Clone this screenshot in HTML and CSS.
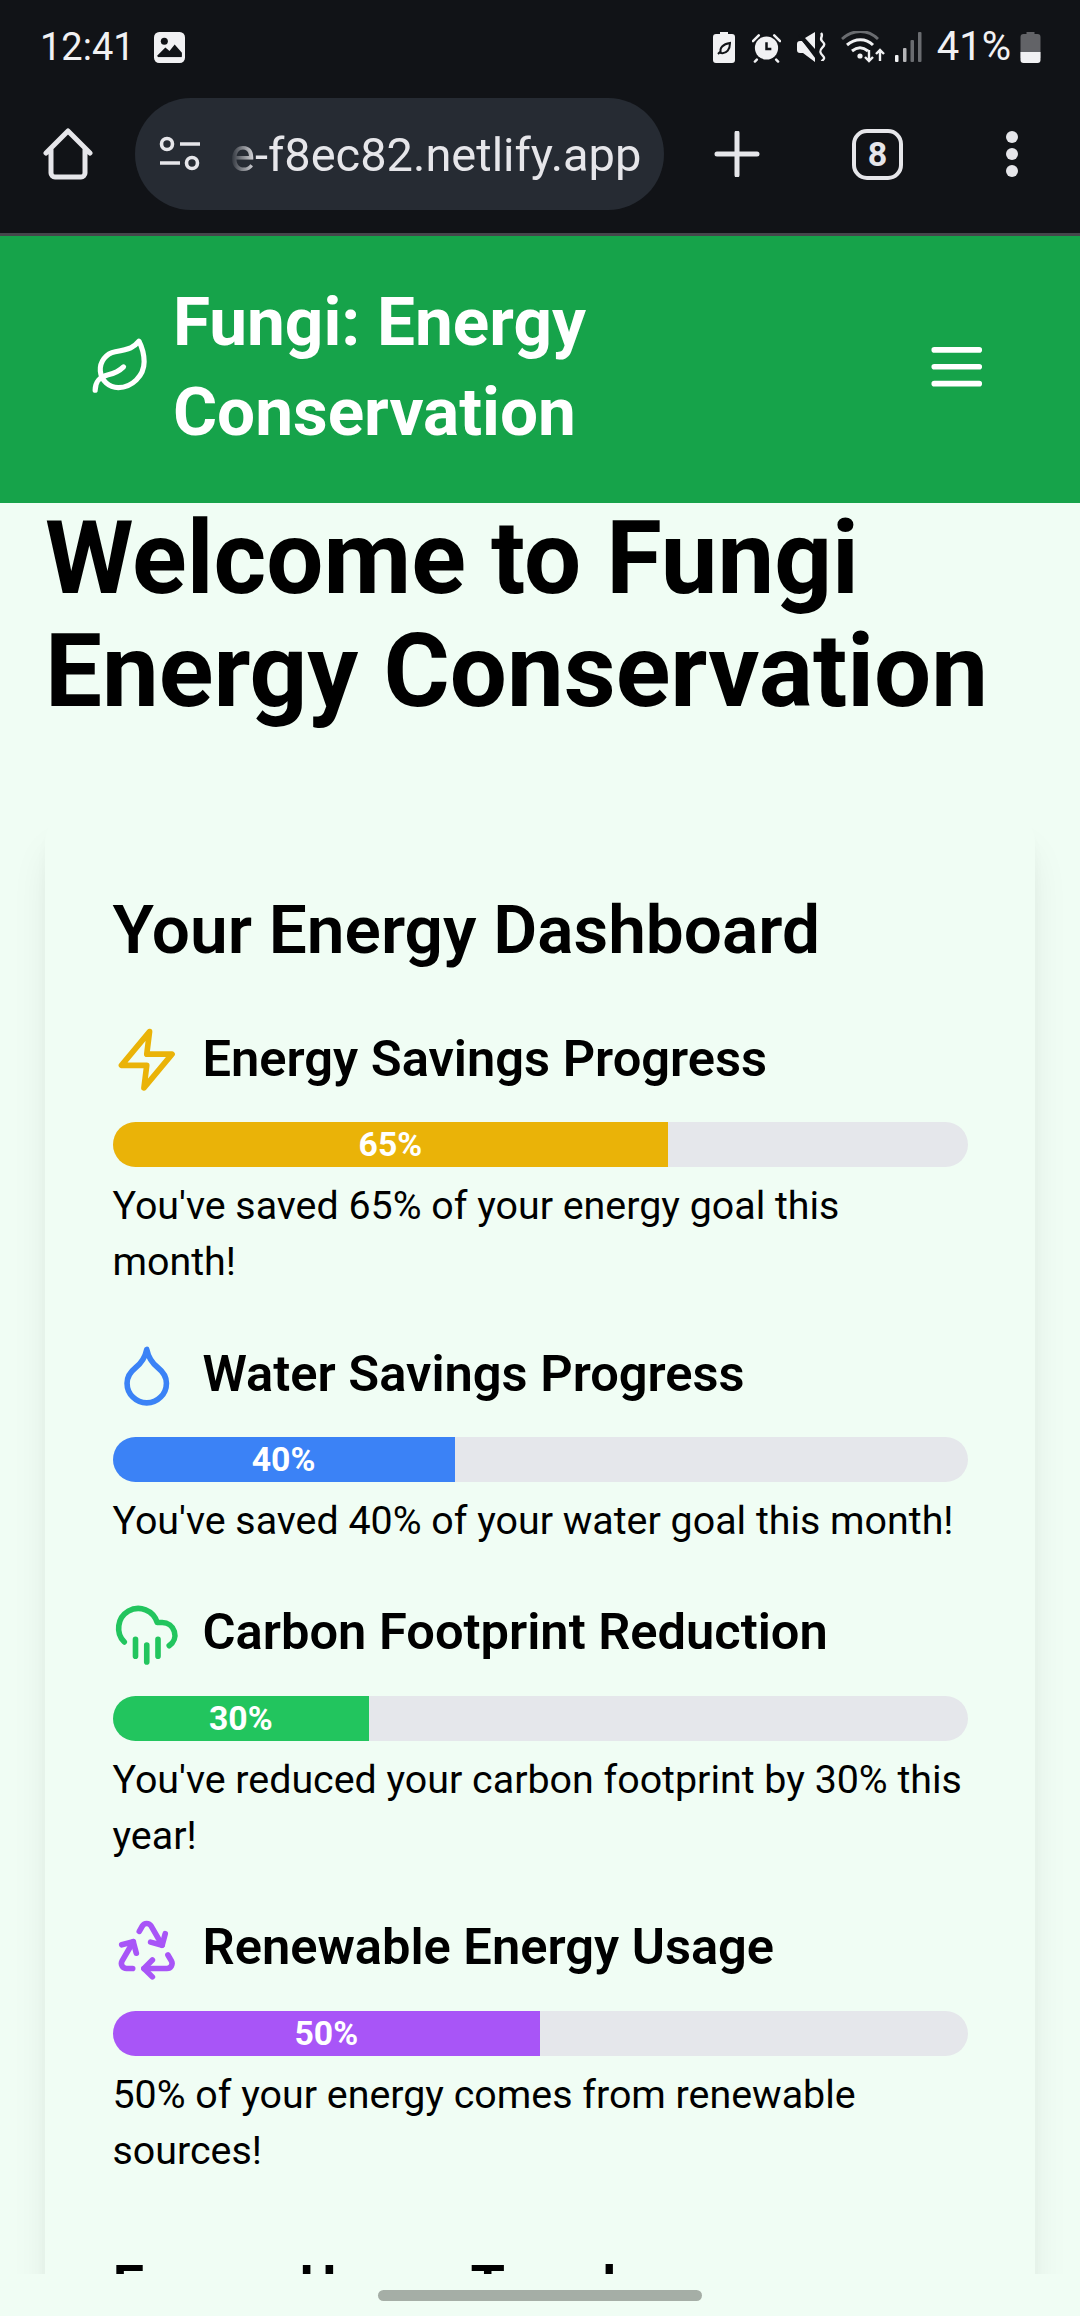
FILE: index.html
```html
<!DOCTYPE html>
<html lang="en">
<head>
<meta charset="utf-8">
<title>Fungi: Energy Conservation</title>
<link rel="stylesheet" href="styles.css">
</head>
<body>
<div class="browser-chrome">
  <div class="status-bar">
    <div class="status-left">
      <span class="clock">12:41</span>
      <svg class="st-image" viewBox="0 0 30 30"><rect width="30" height="30" rx="5" fill="#f1f1f3"/><circle cx="10" cy="9" r="3.400" fill="#111317"/><path d="M3 23l8-8 4 3.500 5-6.500 7 8v3.500a1 1 0 0 1-1 1H4z" fill="#111317"/><rect x="4" y="24.500" width="22" height="2" fill="#f1f1f3"/></svg>
    </div>
    <div class="status-right">
      <svg class="st-bat-leaf" viewBox="0 0 22 31"><path d="M7 0h8v2h4a3 3 0 0 1 3 3v23a3 3 0 0 1-3 3H3a3 3 0 0 1-3-3V5a3 3 0 0 1 3-3h4z" fill="#f1f1f3"/><path d="M5 22c1-1 2-2 3-3M8 21c-2-5 2-9 9-10 0 6-3 11-9 10z" fill="none" stroke="#111317" stroke-width="2"/></svg>
      <svg class="st-alarm" viewBox="0 0 30 31"><circle cx="15" cy="16" r="12" fill="#f1f1f3"/><path d="M15 10v7h5" fill="none" stroke="#111317" stroke-width="2.600"/><path d="M1 9l6-6M29 9l-6-6M5 28l-2 2M25 28l2 2" stroke="#f1f1f3" stroke-width="2.600" stroke-linecap="round"/></svg>
      <svg class="st-mute" viewBox="0 0 29 31"><path d="M0 12c0-2 1-3 3-3h2l13 15v6L6 21H3c-2 0-3-1-3-3z M8 6l10-6v17z" fill="#f1f1f3"/><path d="M2 3l18 24" stroke="#111317" stroke-width="2"/><path d="M24 1c3 3-2 5 1 8s3 4 0 7-2 5 1 8-1 4-1 5" fill="none" stroke="#f1f1f3" stroke-width="2.400"/></svg>
      <svg class="st-wifi" viewBox="0 0 44 32"><path d="M1 8c11-10 26-10 36 0" fill="none" stroke="#6a6c70" stroke-width="2.800"/><path d="M6 14c8-7 19-7 26 0M11 20c5-4 11-4 16 0" fill="none" stroke="#f1f1f3" stroke-width="3"/><circle cx="19" cy="25" r="2.600" fill="#f1f1f3"/><path d="M28 19v11M24 26l4 4 4-4M39 30V19M35 23l4-4 4 4" fill="none" stroke="#f1f1f3" stroke-width="2.400"/></svg>
      <svg class="st-signal" viewBox="0 0 27 30"><rect x="0" y="23" width="3.500" height="7" rx="1" fill="#f1f1f3"/><rect x="8" y="16" width="3.500" height="14" rx="1" fill="#b5b5b8"/><rect x="15.500" y="8" width="3.500" height="22" rx="1" fill="#6a6c70"/><rect x="23" y="0" width="3.500" height="30" rx="1" fill="#6a6c70"/></svg>
      <span class="battery-pct">41%</span>
      <svg class="st-battery" viewBox="0 0 20 31"><path d="M6 0h8v2h3a3 3 0 0 1 3 3v21H0V5a3 3 0 0 1 3-3h3z" fill="#626367"/><path d="M0 20h20v8a3 3 0 0 1-3 3H3a3 3 0 0 1-3-3z" fill="#f1f1f3"/></svg>
    </div>
  </div>
  <div class="toolbar">
    <svg class="tb-home" viewBox="0 0 50 52"><path d="M3 25L25 3l22 22M8 21v24a4 4 0 0 0 4 4h26a4 4 0 0 0 4-4V21" fill="none" stroke="#e6e6ea" stroke-width="5" stroke-linecap="round" stroke-linejoin="round"/></svg>
    <div class="url-pill">
      <svg class="tune" viewBox="0 0 42 36"><circle cx="8" cy="8" r="5.500" fill="none" stroke="#e6e6ea" stroke-width="3.600"/><path d="M21 8h20M1 27h20" stroke="#e6e6ea" stroke-width="3.600"/><circle cx="33" cy="27" r="5.500" fill="none" stroke="#e6e6ea" stroke-width="3.600"/></svg>
      <span class="url-text">e-f8ec82.netlify.app</span>
    </div>
    <svg class="tb-plus" viewBox="0 0 44 46"><path d="M2 23h40M22 2v42" stroke="#e6e6ea" stroke-width="5" stroke-linecap="round"/></svg>
    <div class="tab-count">8</div>
    <div class="tb-dots"><i></i><i></i><i></i></div>
  </div>
</div>

<header class="site-header">
  <div class="brand">
    <svg class="leaf-icon" viewBox="0 0 24 24" fill="none" stroke="#fff" stroke-width="2" stroke-linecap="round" stroke-linejoin="round"><path d="M11 20A7 7 0 0 1 9.800 6.100C15.500 5 17 4.480 19 2c1 2 2 4.180 2 8 0 5.500-4.780 10-10 10Z"/><path d="M2 21c0-3 1.850-5.360 5.080-6C9.500 14.520 12 13 13 12"/></svg>
    <span class="brand-name">Fungi: Energy Conservation</span>
  </div>
  <svg class="icon" viewBox="0 0 24 24" fill="none" stroke="#fff" stroke-width="2" stroke-linecap="round"><path d="M4 6h16M4 12h16M4 18h16"/></svg>
</header>

<main class="content">
  <h1 class="page-title">Welcome to Fungi Energy Conservation</h1>
  <section class="card">
    <h2 class="card-title">Your Energy Dashboard</h2>

    <div class="metric">
      <h3 class="metric-title">
        <svg class="icon yellow" viewBox="0 0 24 24" fill="none" stroke="currentColor" stroke-width="2" stroke-linecap="round" stroke-linejoin="round"><polygon points="13 2 3 14 12 14 11 22 21 10 12 10 13 2"/></svg>
        <span class="metric-label">Energy Savings Progress</span>
      </h3>
      <div class="track"><div class="fill bg-yellow" style="width:65%">65%</div></div>
      <p class="metric-text">You've saved 65% of your energy goal this month!</p>
    </div>

    <div class="metric">
      <h3 class="metric-title">
        <svg class="icon blue" viewBox="0 0 24 24" fill="none" stroke="currentColor" stroke-width="2" stroke-linecap="round" stroke-linejoin="round"><path d="M12 22a7 7 0 0 0 7-7c0-2-1-3.900-3-5.500s-3.500-4-4-6.500c-.5 2.500-2 4.900-4 6.500C6 11.100 5 13 5 15a7 7 0 0 0 7 7z"/></svg>
        <span class="metric-label">Water Savings Progress</span>
      </h3>
      <div class="track"><div class="fill bg-blue" style="width:40%">40%</div></div>
      <p class="metric-text">You've saved 40% of your water goal this month!</p>
    </div>

    <div class="metric">
      <h3 class="metric-title">
        <svg class="icon green" viewBox="0 0 24 24" fill="none" stroke="currentColor" stroke-width="2" stroke-linecap="round" stroke-linejoin="round"><path d="M4 14.899A7 7 0 1 1 15.710 8h1.790a4.500 4.500 0 0 1 2.500 8.242"/><path d="M16 14v6M8 14v6M12 16v6"/></svg>
        <span class="metric-label">Carbon Footprint Reduction</span>
      </h3>
      <div class="track"><div class="fill bg-green" style="width:30%">30%</div></div>
      <p class="metric-text">You've reduced your carbon footprint by 30% this year!</p>
    </div>

    <div class="metric">
      <h3 class="metric-title">
        <svg class="icon purple" viewBox="0 0 24 24" fill="none" stroke="currentColor" stroke-width="2" stroke-linecap="round" stroke-linejoin="round"><path d="M7 19H4.815a1.830 1.830 0 0 1-1.570-.881 1.785 1.785 0 0 1-.004-1.784L7.196 9.500"/><path d="M11 19h8.203a1.830 1.830 0 0 0 1.556-.890 1.784 1.784 0 0 0 0-1.775l-1.226-2.120"/><path d="m14 16-3 3 3 3"/><path d="M8.293 13.596 7.196 9.500 3.100 10.598"/><path d="m9.344 5.811 1.093-1.892A1.830 1.830 0 0 1 11.985 3a1.784 1.784 0 0 1 1.546.888l3.943 6.843"/><path d="m13.378 9.633 4.096 1.098 1.097-4.096"/></svg>
        <span class="metric-label">Renewable Energy Usage</span>
      </h3>
      <div class="track"><div class="fill bg-purple" style="width:50%">50%</div></div>
      <p class="metric-text">50% of your energy comes from renewable sources!</p>
    </div>

    <h2 class="next-title">Energy Usage Trends</h2>
  </section>
</main>

<div class="gesture-bar"><div class="gesture-pill"></div></div>
</body>
</html>
```

FILE: styles.css
```css
* { box-sizing: border-box; }

html, body { margin: 0; padding: 0; }

body {
  width: 1080px;
  height: 2316px;
  overflow: hidden;
  display: flex;
  flex-direction: column;
  background: #f0fdf4;
  color: #000;
  font-family: Roboto, "Liberation Sans", sans-serif;
}

/* browser chrome */
.browser-chrome {
  flex: none;
  height: 236px;
  background: #111317;
  border-bottom: 3px solid #45474b;
  color: #e6e6ea;
}

.status-bar {
  height: 98px;
  padding: 0 39px 4px 40px;
  display: flex;
  align-items: center;
  justify-content: space-between;
}

.status-left, .status-right { display: flex; align-items: center; }

.clock {
  font-size: 38px;
  color: #f1f1f3;
  line-height: 1;
}

.battery-pct {
  font-size: 40px;
  color: #f1f1f3;
  line-height: 1;
  margin-left: 15px;
}

.st-image { width: 31px; height: 31px; margin-left: 19px; }
.st-bat-leaf { width: 22px; height: 31px; }
.st-alarm { width: 29px; height: 31px; margin-left: 17px; }
.st-mute { width: 29px; height: 31px; margin-left: 16px; }
.st-wifi { width: 44px; height: 32px; margin-left: 15px; }
.st-signal { width: 27px; height: 30px; margin-left: 10px; }
.st-battery { width: 21px; height: 31px; margin-left: 9px; }

.toolbar {
  height: 112px;
  display: flex;
  align-items: center;
  padding-left: 42px;
}

.tb-home { width: 52px; height: 52px; flex: none; }

.url-pill {
  width: 529px;
  height: 112px;
  margin-left: 41px;
  border-radius: 56px;
  background: #262b33;
  display: flex;
  align-items: center;
  padding-left: 24px;
  flex: none;
}

.tune { width: 42px; height: 36px; flex: none; }

.url-text {
  margin-left: 29px;
  font-size: 47px;
  color: #e6e6ea;
  white-space: nowrap;
  -webkit-mask-image: linear-gradient(90deg, transparent 0, #000 26px);
  mask-image: linear-gradient(90deg, transparent 0, #000 26px);
}

.tb-plus { width: 46px; height: 46px; margin-left: 50px; flex: none; }

.tab-count {
  width: 51px;
  height: 51px;
  margin-left: 92px;
  flex: none;
  border: 4.500px solid #e6e6ea;
  border-radius: 15px;
  display: flex;
  align-items: center;
  justify-content: center;
  font-size: 34px;
  font-weight: 700;
  color: #e6e6ea;
}

.tb-dots {
  margin-left: 103px;
  display: flex;
  flex-direction: column;
  gap: 5px;
}

.tb-dots i {
  display: block;
  width: 12px;
  height: 12px;
  border-radius: 50%;
  background: #e6e6ea;
}

/* site header */
.site-header {
  flex: none;
  height: 267px;
  padding: 0 90px 6px;
  background: #16a34a;
  color: #fff;
  display: flex;
  align-items: center;
  justify-content: space-between;
}

.brand { display: flex; align-items: center; gap: 21px; }

.brand-name {
  width: 480px;
  font-size: 67.500px;
  line-height: 90px;
  font-weight: 700;
}

.leaf-icon { width: 61.875px; height: 61.875px; flex: none; }
.icon { width: 67.500px; height: 67.500px; flex: none; }

/* content */
.content {
  flex: 1;
  min-height: 0;
  overflow: hidden;
  padding: 0 45px;
}

.page-title {
  margin: 0 0 90px;
  font-size: 101.250px;
  line-height: 112.500px;
  font-weight: 700;
}

.card {
  padding: 67.500px;
  border-radius: 22.500px;
  background: #f0fdf4;
  box-shadow: 0 28px 42px -8px rgba(0, 0, 0, .1), 0 11px 17px -6px rgba(0, 0, 0, .05);
}

.card-title {
  margin: 0 0 48px;
  font-size: 67.500px;
  line-height: 87px;
  font-weight: 600;
}

.next-title {
  margin: 67.500px 0 0;
  font-size: 56.250px;
  line-height: 78.750px;
  font-weight: 600;
}

.metric { margin-bottom: 45px; }

.metric-title {
  margin: 0 0 22.500px;
  min-height: 78.750px;
  display: flex;
  align-items: center;
  gap: 22.500px;
  font-size: 50.625px;
  line-height: 75.750px;
  font-weight: 600;
}

.metric-label { margin-bottom: 3px; }

.track {
  height: 45px;
  border-radius: 22.500px;
  background: #e5e7eb;
  overflow: hidden;
}

.fill {
  height: 100%;
  text-align: center;
  color: #fff;
  font-size: 33.750px;
  line-height: 45px;
  font-weight: 700;
}

.metric-text {
  margin: 11.250px 0 0;
  font-size: 39.375px;
  line-height: 56.250px;
}

.yellow { color: #eab308; }
.blue { color: #3b82f6; }
.green { color: #22c55e; }
.purple { color: #a855f7; }

.bg-yellow { background: #eab308; }
.bg-blue { background: #3b82f6; }
.bg-green { background: #22c55e; }
.bg-purple { background: #a855f7; }

/* gesture area */
.gesture-bar {
  flex: none;
  height: 42px;
  background: #f0fdf4;
  display: flex;
  justify-content: center;
  padding-top: 16px;
}

.gesture-pill {
  width: 324px;
  height: 11px;
  border-radius: 6px;
  background: #a5aea6;
}
```
